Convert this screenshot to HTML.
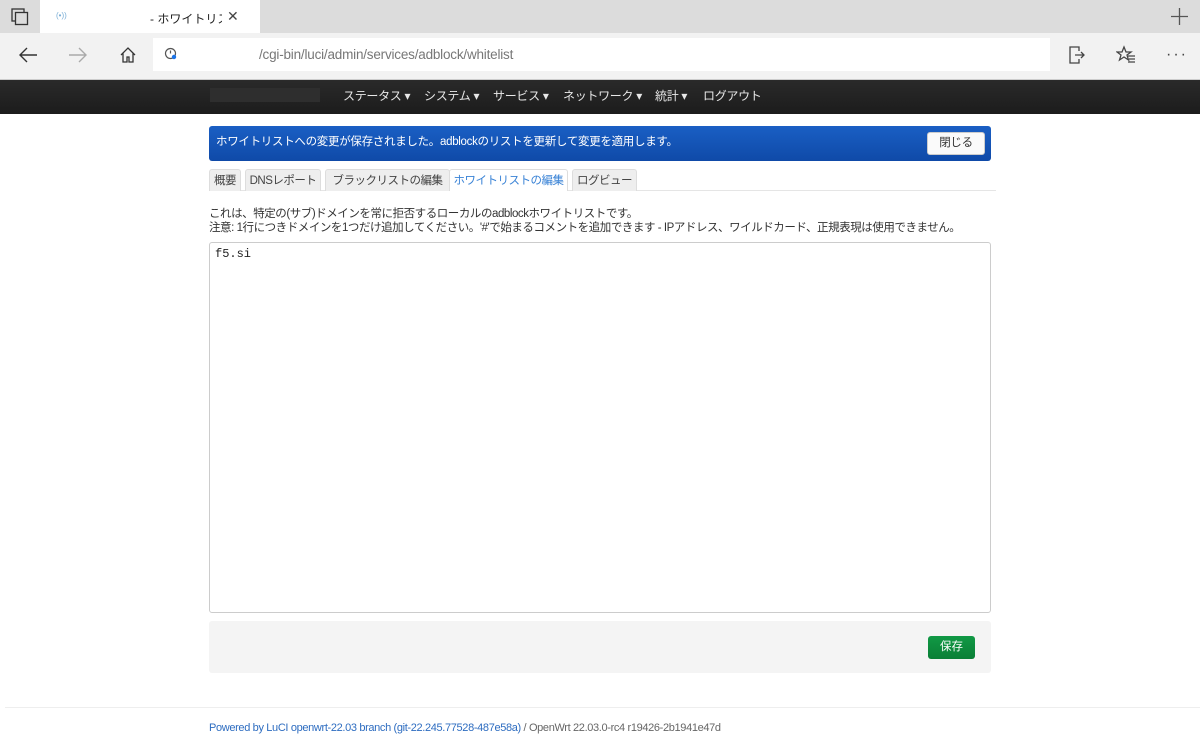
<!DOCTYPE html>
<html><head><meta charset="utf-8"><style>
*{box-sizing:border-box;margin:0;padding:0}
body{width:1200px;height:750px;overflow:hidden;background:#fff;font-family:"Liberation Sans","Noto Sans CJK JP",sans-serif;font-size:12px;color:#404040;position:relative}
.abs{position:absolute;white-space:nowrap}
.tabbar{left:0;top:0;width:1200px;height:33px;background:#dcdcdc}
.addr{left:0;top:33px;width:1200px;height:46px;background:#f2f2f2}
.nav{left:0;top:79px;width:1200px;height:35px;background:linear-gradient(#2a2a2a,#1c1c1c);border-top:1px solid #ccc}
.nav span{position:absolute;top:7px;color:#e8e8e8;font-size:12px;letter-spacing:-0.3px;white-space:nowrap}
.alert{left:209px;top:126px;width:782px;height:35px;background:linear-gradient(#1a5fc4,#0f4aa8);border-radius:3px;color:#fff;font-size:11.5px;padding:7px 7px;letter-spacing:-0.3px}
.btn{position:absolute;right:6px;top:6px;width:58px;height:23px;background:#fafafa;border:1px solid #ccc;border-radius:3px;color:#333;text-align:center;line-height:21px;font-size:11.5px}
.tabs{left:209px;top:169px;height:22px;width:787px;border-bottom:1px solid #e5e5e5}
.tab{position:absolute;top:0;height:22px;background:#eee;border:1px solid #ddd;border-bottom:none;border-radius:3px 3px 0 0;font-size:11.5px;padding:2px 0;text-align:center;letter-spacing:-0.5px;color:#444;white-space:nowrap;overflow:hidden}
.tab.a{background:#fff;color:#3a83d6}
.txt{left:209px;font-size:11.5px;letter-spacing:-0.45px;color:#333}
.ta{left:209px;top:242px;width:782px;height:371px;border:1px solid #ccc;border-radius:3px;font-family:"Liberation Mono",monospace;font-size:12px;padding:4px 5px;color:#222}
.panel{left:209px;top:621px;width:782px;height:52px;background:#f4f4f4;border-radius:3px}
.save{left:928px;top:636px;width:47px;height:23px;background:linear-gradient(#119945,#0a7f36);border-radius:3px;color:#fff;text-align:center;line-height:23px;font-size:11.5px}
.foot{left:5px;top:707px;width:1195px;border-top:1px solid #eee}
</style></head><body>
<div class="abs tabbar"></div>
<svg class="abs" style="left:11px;top:8px" width="18" height="18" viewBox="0 0 18 18" fill="none" stroke="#333" stroke-width="1.3"><rect x="1" y="1" width="12" height="12"/><rect x="4.5" y="4.5" width="12" height="12" fill="#dcdcdc"/></svg>
<div class="abs" style="left:40px;top:0;width:220px;height:33px;background:#fff"></div>
<div class="abs" style="left:56px;top:11px;color:#7aaed6;font-size:8px">(•))</div>
<div class="abs" style="left:150px;top:10px;font-size:12px;color:#222;width:72px;overflow:hidden">- ホワイトリス</div>
<div class="abs" style="left:227px;top:8px;font-size:14px;color:#444">✕</div>
<svg class="abs" style="left:1170px;top:7px" width="19" height="19" viewBox="0 0 19 19" stroke="#555" stroke-width="1.3"><path d="M9.5 1v17M1 9.5h17"/></svg>
<div class="abs addr"></div>
<svg class="abs" style="left:18px;top:46px" width="20" height="18" viewBox="0 0 20 18" fill="none" stroke="#333" stroke-width="1.4"><path d="M19 9H2M9 2L2 9l7 7"/></svg>
<svg class="abs" style="left:68px;top:46px" width="20" height="18" viewBox="0 0 20 18" fill="none" stroke="#aaa" stroke-width="1.4"><path d="M1 9h17M11 2l7 7-7 7"/></svg>
<svg class="abs" style="left:119px;top:46px" width="18" height="18" viewBox="0 0 18 18" fill="none" stroke="#333" stroke-width="1.3"><path d="M2 9L9 2l7 7M4 7.5V16h4v-5h2v5h4V7.5"/></svg>
<div class="abs" style="left:153px;top:38px;width:897px;height:33px;background:#fff"></div>
<svg class="abs" style="left:164px;top:47px" width="14" height="14" viewBox="0 0 14 14" fill="none" stroke="#555" stroke-width="1.2"><circle cx="6.5" cy="6.5" r="5"/><path d="M6.5 3.5v3"/><circle cx="10" cy="10" r="2.2" fill="#1a73e8" stroke="none"/></svg>
<div class="abs" style="left:259px;top:47px;font-size:13.5px;color:#777;letter-spacing:-0.2px">/cgi-bin/luci/admin/services/adblock/whitelist</div>
<svg class="abs" style="left:1066px;top:45px" width="20" height="20" viewBox="0 0 20 20" fill="none" stroke="#444" stroke-width="1.3"><path d="M13 6V2H4v16h9v-4M9 10h9M15 7l3 3-3 3"/></svg>
<svg class="abs" style="left:1116px;top:45px" width="20" height="20" viewBox="0 0 20 20" fill="none" stroke="#444" stroke-width="1.3"><path d="M8 2l2 5h5l-4 3 1.5 5L8 12l-4.5 3L5 10 1 7h5z M12 11h7M13 14h6M12 17h7"/></svg>
<div class="abs" style="left:1166px;top:46px;font-size:16px;color:#444;letter-spacing:2px">···</div>
<div class="abs nav">
<div class="abs" style="left:210px;top:8px;width:110px;height:14px;background:#2e2e2e"></div>
<span style="left:343px">ステータス ▾</span>
<span style="left:424px">システム ▾</span>
<span style="left:493px">サービス ▾</span>
<span style="left:563px">ネットワーク ▾</span>
<span style="left:655px">統計 ▾</span>
<span style="left:703px">ログアウト</span>
</div>
<div class="abs alert">ホワイトリストへの変更が保存されました。adblockのリストを更新して変更を適用します。<div class="btn">閉じる</div></div>
<div class="abs tabs">
<div class="tab" style="left:0;width:32px">概要</div>
<div class="tab" style="left:36px;width:76px">DNSレポート</div>
<div class="tab" style="left:116px;width:125px">ブラックリストの編集</div>
<div class="tab a" style="left:240px;width:119px">ホワイトリストの編集</div>
<div class="tab" style="left:363px;width:65px">ログビュー</div>
</div>
<div class="abs txt" style="top:205px">これは、特定の(サブ)ドメインを常に拒否するローカルのadblockホワイトリストです。</div>
<div class="abs txt" style="top:219px">注意: 1行につきドメインを1つだけ追加してください。'#'で始まるコメントを追加できます - IPアドレス、ワイルドカード、正規表現は使用できません。</div>
<div class="abs ta">f5.si</div>
<div class="abs panel"></div>
<div class="abs save">保存</div>
<div class="abs foot"></div>
<div class="abs" style="left:209px;top:722px;font-size:11px;letter-spacing:-0.35px;color:#666"><span style="color:#2d6cc0">Powered by LuCI openwrt-22.03 branch (git-22.245.77528-487e58a)</span> / OpenWrt 22.03.0-rc4 r19426-2b1941e47d</div>
</body></html>
